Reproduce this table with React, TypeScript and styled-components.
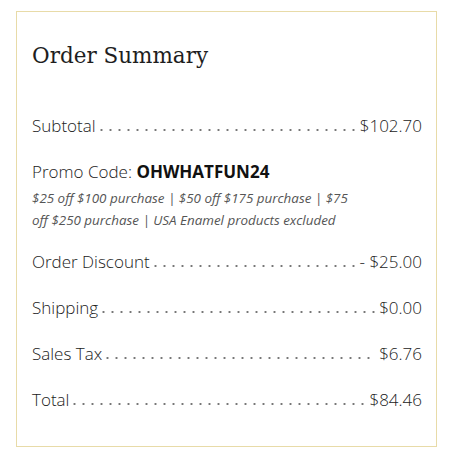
import React from 'react'
import styled, { createGlobalStyle } from 'styled-components'

const GlobalStyle = createGlobalStyle`
    body {
        margin: 0;
        background: #fff;
        font-family: "Open Sans", "Liberation Sans", sans-serif;
    }
`

interface LineProps {
    label: string;
    value: string;
}

const lines: LineProps[] = [
    { label: 'Order Discount', value: '- $25.00' },
    { label: 'Shipping', value: '$0.00' },
    { label: 'Sales Tax', value: '$6.76' },
    { label: 'Total', value: '$84.46' },
]

const SummaryLine: React.FC<LineProps> = ({ label, value }) => (
    <Row>
        <Label>{label}</Label>
        <Leader />
        <Value>{value}</Value>
    </Row>
)

export default function App() {
    return (
        <>
            <GlobalStyle />
            <Card>
                <Title>Order Summary</Title>
                <SummaryLine label="Subtotal" value="$102.70" />
                <Promo>
                    <PromoLabel>Promo Code: <strong>OHWHATFUN24</strong></PromoLabel>
                    <PromoNote>
                        $25 off $100 purchase | $50 off $175 purchase | $75 off $250 purchase | USA Enamel products excluded
                    </PromoNote>
                </Promo>
                {lines.map((l) => <SummaryLine key={l.label} {...l} />)}
            </Card>
        </>
    )
}

const Card = styled.div`
    box-sizing: border-box;
    width: 421px;
    height: 436px;
    margin: 11px 0 0 16px;
    border: 1px solid #e8dba8;
    padding: 29px 14px 0 15px;
    color: #222;
`

const Title = styled.h2`
    margin: 0 0 43px;
    font-family: "DejaVu Serif", "Liberation Serif", serif;
    font-weight: 400;
    font-size: 21.5px;
    line-height: 30px;
    color: #1e1e1e;
`

const Row = styled.div`
    display: flex;
    align-items: baseline;
    font-size: 17px;
    font-weight: 300;
    line-height: 24px;
    margin-bottom: 22px;
`

const Label = styled.span`
    white-space: nowrap;
`

const Leader = styled.span`
    flex: 1;
    height: 4px;
    margin: 0 4px 0 1px;
    background-image: radial-gradient(circle, #777 0.9px, transparent 1.3px);
    background-size: 9px 4px;
    background-repeat: repeat-x;
    background-position: left bottom;
`

const Value = styled.span`
    white-space: nowrap;
`

const Promo = styled.div`
    margin-bottom: 19px;
`

const PromoLabel = styled.div`
    font-size: 17px;
    font-weight: 300;
    line-height: 24px;
    margin-bottom: 3px;
    strong {
        font-weight: 700;
        color: #111;
    }
`

const PromoNote = styled.div`
    width: 320px;
    font-size: 13.4px;
    font-style: italic;
    line-height: 22px;
    color: #555;
`
